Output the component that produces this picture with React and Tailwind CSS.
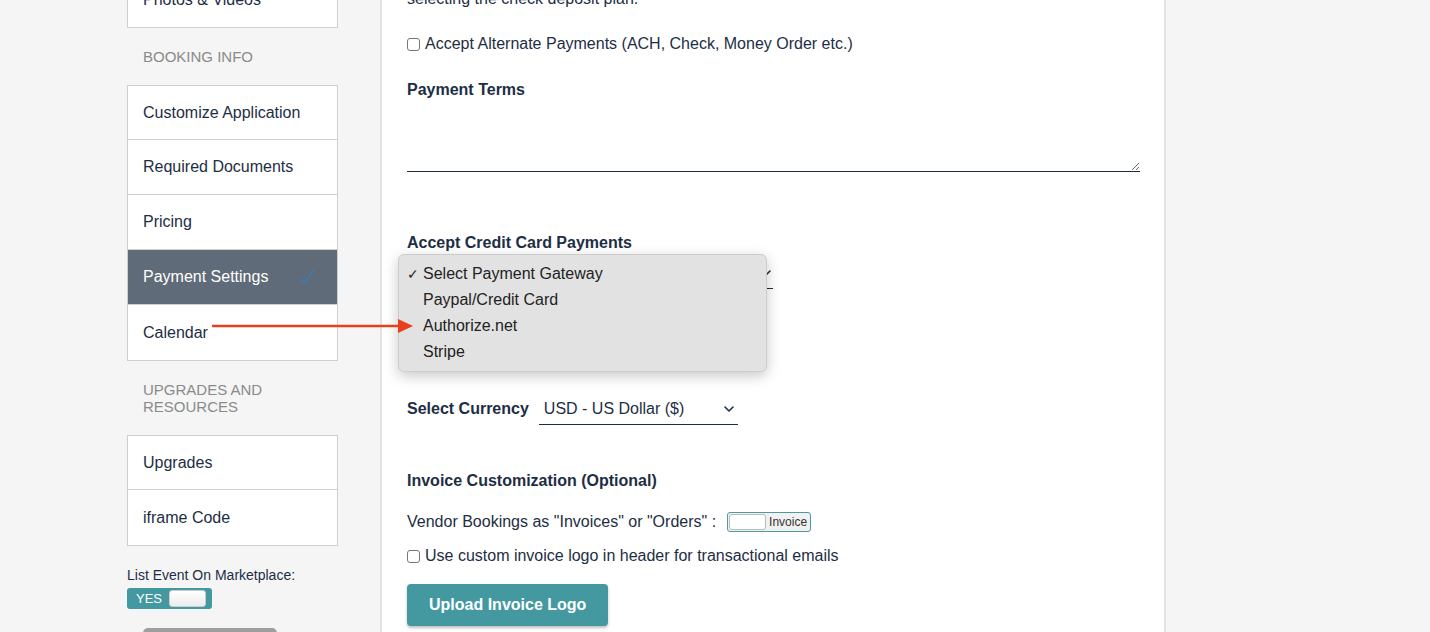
import React from 'react';

function NavGroup({ items }) {
  return (
    <div className="border border-[#cfcfcf] bg-white divide-y divide-[#cfcfcf]">
      {items.map((it) => (
        <div
          key={it.label}
          className={`h-[55px] first:h-[54px] flex items-center justify-between pl-[15px] pr-[22px] text-[16px] ${
            it.active ? 'bg-[#5f6b78] text-white' : 'text-[#1d2e44]'
          }`}
        >
          <span>{it.label}</span>
          {it.active && (
            <svg width="16" height="16" viewBox="0 0 16 16" fill="none">
              <path d="M1.5 9.5 L5.5 14 L14.5 1.5" stroke="#3a7cb8" strokeWidth="1.4" strokeLinecap="round" />
            </svg>
          )}
        </div>
      ))}
    </div>
  );
}

function SectionLabel({ children }) {
  return (
    <div className="py-[20px] pl-[16px] pr-[60px] text-[15px] leading-[17px] text-[#8a8a8a] uppercase">
      {children}
    </div>
  );
}

function Chevron() {
  return (
    <svg width="10" height="6" viewBox="0 0 10 6" fill="none">
      <path d="M1 1 L5 5 L9 1" stroke="#1d2e44" strokeWidth="1.6" strokeLinecap="round" strokeLinejoin="round" />
    </svg>
  );
}

function Check({ label, className = '' }) {
  return (
    <label className={`flex items-center h-[24px] ${className}`}>
      <span className="w-[13px] h-[13px] border border-[#777] rounded-[3px] bg-white mr-[5px]" />
      <span>{label}</span>
    </label>
  );
}

export default function App() {
  return (
    <div
      className="relative h-[632px] overflow-hidden bg-[#f5f5f5] flex pl-[127px]"
      style={{ fontFamily: '"Liberation Sans", Arial, Helvetica, sans-serif' }}
    >
      {/* sidebar */}
      <div className="w-[211px] -mt-[28px] shrink-0">
        <NavGroup items={[{ label: 'Photos & Videos' }]} />
        <SectionLabel>Booking Info</SectionLabel>
        <NavGroup
          items={[
            { label: 'Customize Application' },
            { label: 'Required Documents' },
            { label: 'Pricing' },
            { label: 'Payment Settings', active: true },
            { label: 'Calendar' },
          ]}
        />
        <SectionLabel>Upgrades and Resources</SectionLabel>
        <NavGroup items={[{ label: 'Upgrades' }, { label: 'iframe Code' }]} />
        <div className="mt-[21px] text-[14px] leading-[16px] text-[#1d2e44]">List Event On Marketplace:</div>
        <div className="mt-[5px] w-[85px] h-[21px] bg-[#4499a1] rounded-[3px] flex items-center pl-[9px] pr-[6px] justify-between">
          <span className="text-[13px] text-white">YES</span>
          <span className="w-[37px] h-[17px] rounded-[3px] border border-[#ccc] bg-gradient-to-b from-white to-[#ececec]" />
        </div>
        <div className="mt-[19px] ml-[16px] w-[134px] h-[30px] bg-[#9e9e9e] rounded-[5px]" />
      </div>

      {/* main panel */}
      <div className="ml-[42px] w-[786px] h-full shrink-0 bg-white border-x-2 border-[#e3e3e3] pl-[25px] pr-[24px] text-[16px] text-[#1d2e44]">
        <div className="-mt-[13px]">
          <p className="leading-[24px]">selecting the check deposit plan.</p>

          <Check label="Accept Alternate Payments (ACH, Check, Money Order etc.)" className="mt-[21px]" />

          <div className="mt-[22px] font-bold leading-[24px]">Payment Terms</div>
          <textarea className="mt-[8px] block w-full h-[62px] border-b border-[#1d2e44] outline-none resize-y" />

          <div className="mt-[59px] font-bold leading-[24px]">Accept Credit Card Payments</div>
          <div className="relative mt-[2px] w-[366px]">
            <div className="h-[32px] border-b border-[#1d2e44] flex items-center justify-between pl-[5px] pr-[2px]">
              <span>Select Payment Gateway</span>
              <Chevron />
            </div>
            <div className="absolute -left-[9px] -top-[3px] w-[369px] py-[6px] rounded-[6px] bg-[#e2e2e2] border border-[#cdcdcd] shadow-[0_4px_14px_rgba(0,0,0,0.22)] text-[#222] z-10">
              {['Select Payment Gateway', 'Paypal/Credit Card', 'Authorize.net', 'Stripe'].map((o, i) => (
                <div key={o} className="h-[26px] flex items-center">
                  <span className="w-[24px] pl-[8px] text-[14px]">{i === 0 ? '✓' : ''}</span>
                  <span>{o}</span>
                </div>
              ))}
            </div>
          </div>

          <div className="mt-[59px] font-bold leading-[24px]">Select Supported Card Types</div>

          <div className="mt-[21px] flex items-center">
            <span className="font-bold mr-[10px]">Select Currency</span>
            <div className="w-[199px] h-[32px] border-b border-[#1d2e44] flex items-center justify-between pl-[5px] pr-[4px]">
              <span>USD - US Dollar ($)</span>
              <Chevron />
            </div>
          </div>

          <div className="mt-[44px] font-bold leading-[24px]">Invoice Customization (Optional)</div>

          <div className="mt-[17px] flex items-center h-[24px]">
            <span>Vendor Bookings as "Invoices" or "Orders" :</span>
            <div className="ml-[11px] w-[84px] h-[20px] border border-[#4a9aa0] rounded-[3px] bg-[#f1f1f1] flex items-center pl-[1px]">
              <span className="w-[37px] h-[16px] rounded-[3px] border border-[#bbb] bg-white" />
              <span className="ml-[3px] text-[12px] text-[#333]">Invoice</span>
            </div>
          </div>

          <Check label="Use custom invoice logo in header for transactional emails" className="mt-[10px]" />

          <button className="mt-[16px] h-[42px] px-[22px] rounded-[4px] bg-[#4499a1] text-white font-bold text-[16px] shadow-[0_2px_3px_rgba(0,0,0,0.25)]">
            Upload Invoice Logo
          </button>
        </div>
      </div>

      {/* red annotation arrow */}
      <svg className="absolute left-[212px] top-[319px] z-20" width="202" height="14" viewBox="0 0 202 14">
        <line x1="0" y1="7" x2="188" y2="7" stroke="#e8401c" strokeWidth="2.5" />
        <polygon points="186,0 201,7 186,14" fill="#e8401c" />
      </svg>
    </div>
  );
}
